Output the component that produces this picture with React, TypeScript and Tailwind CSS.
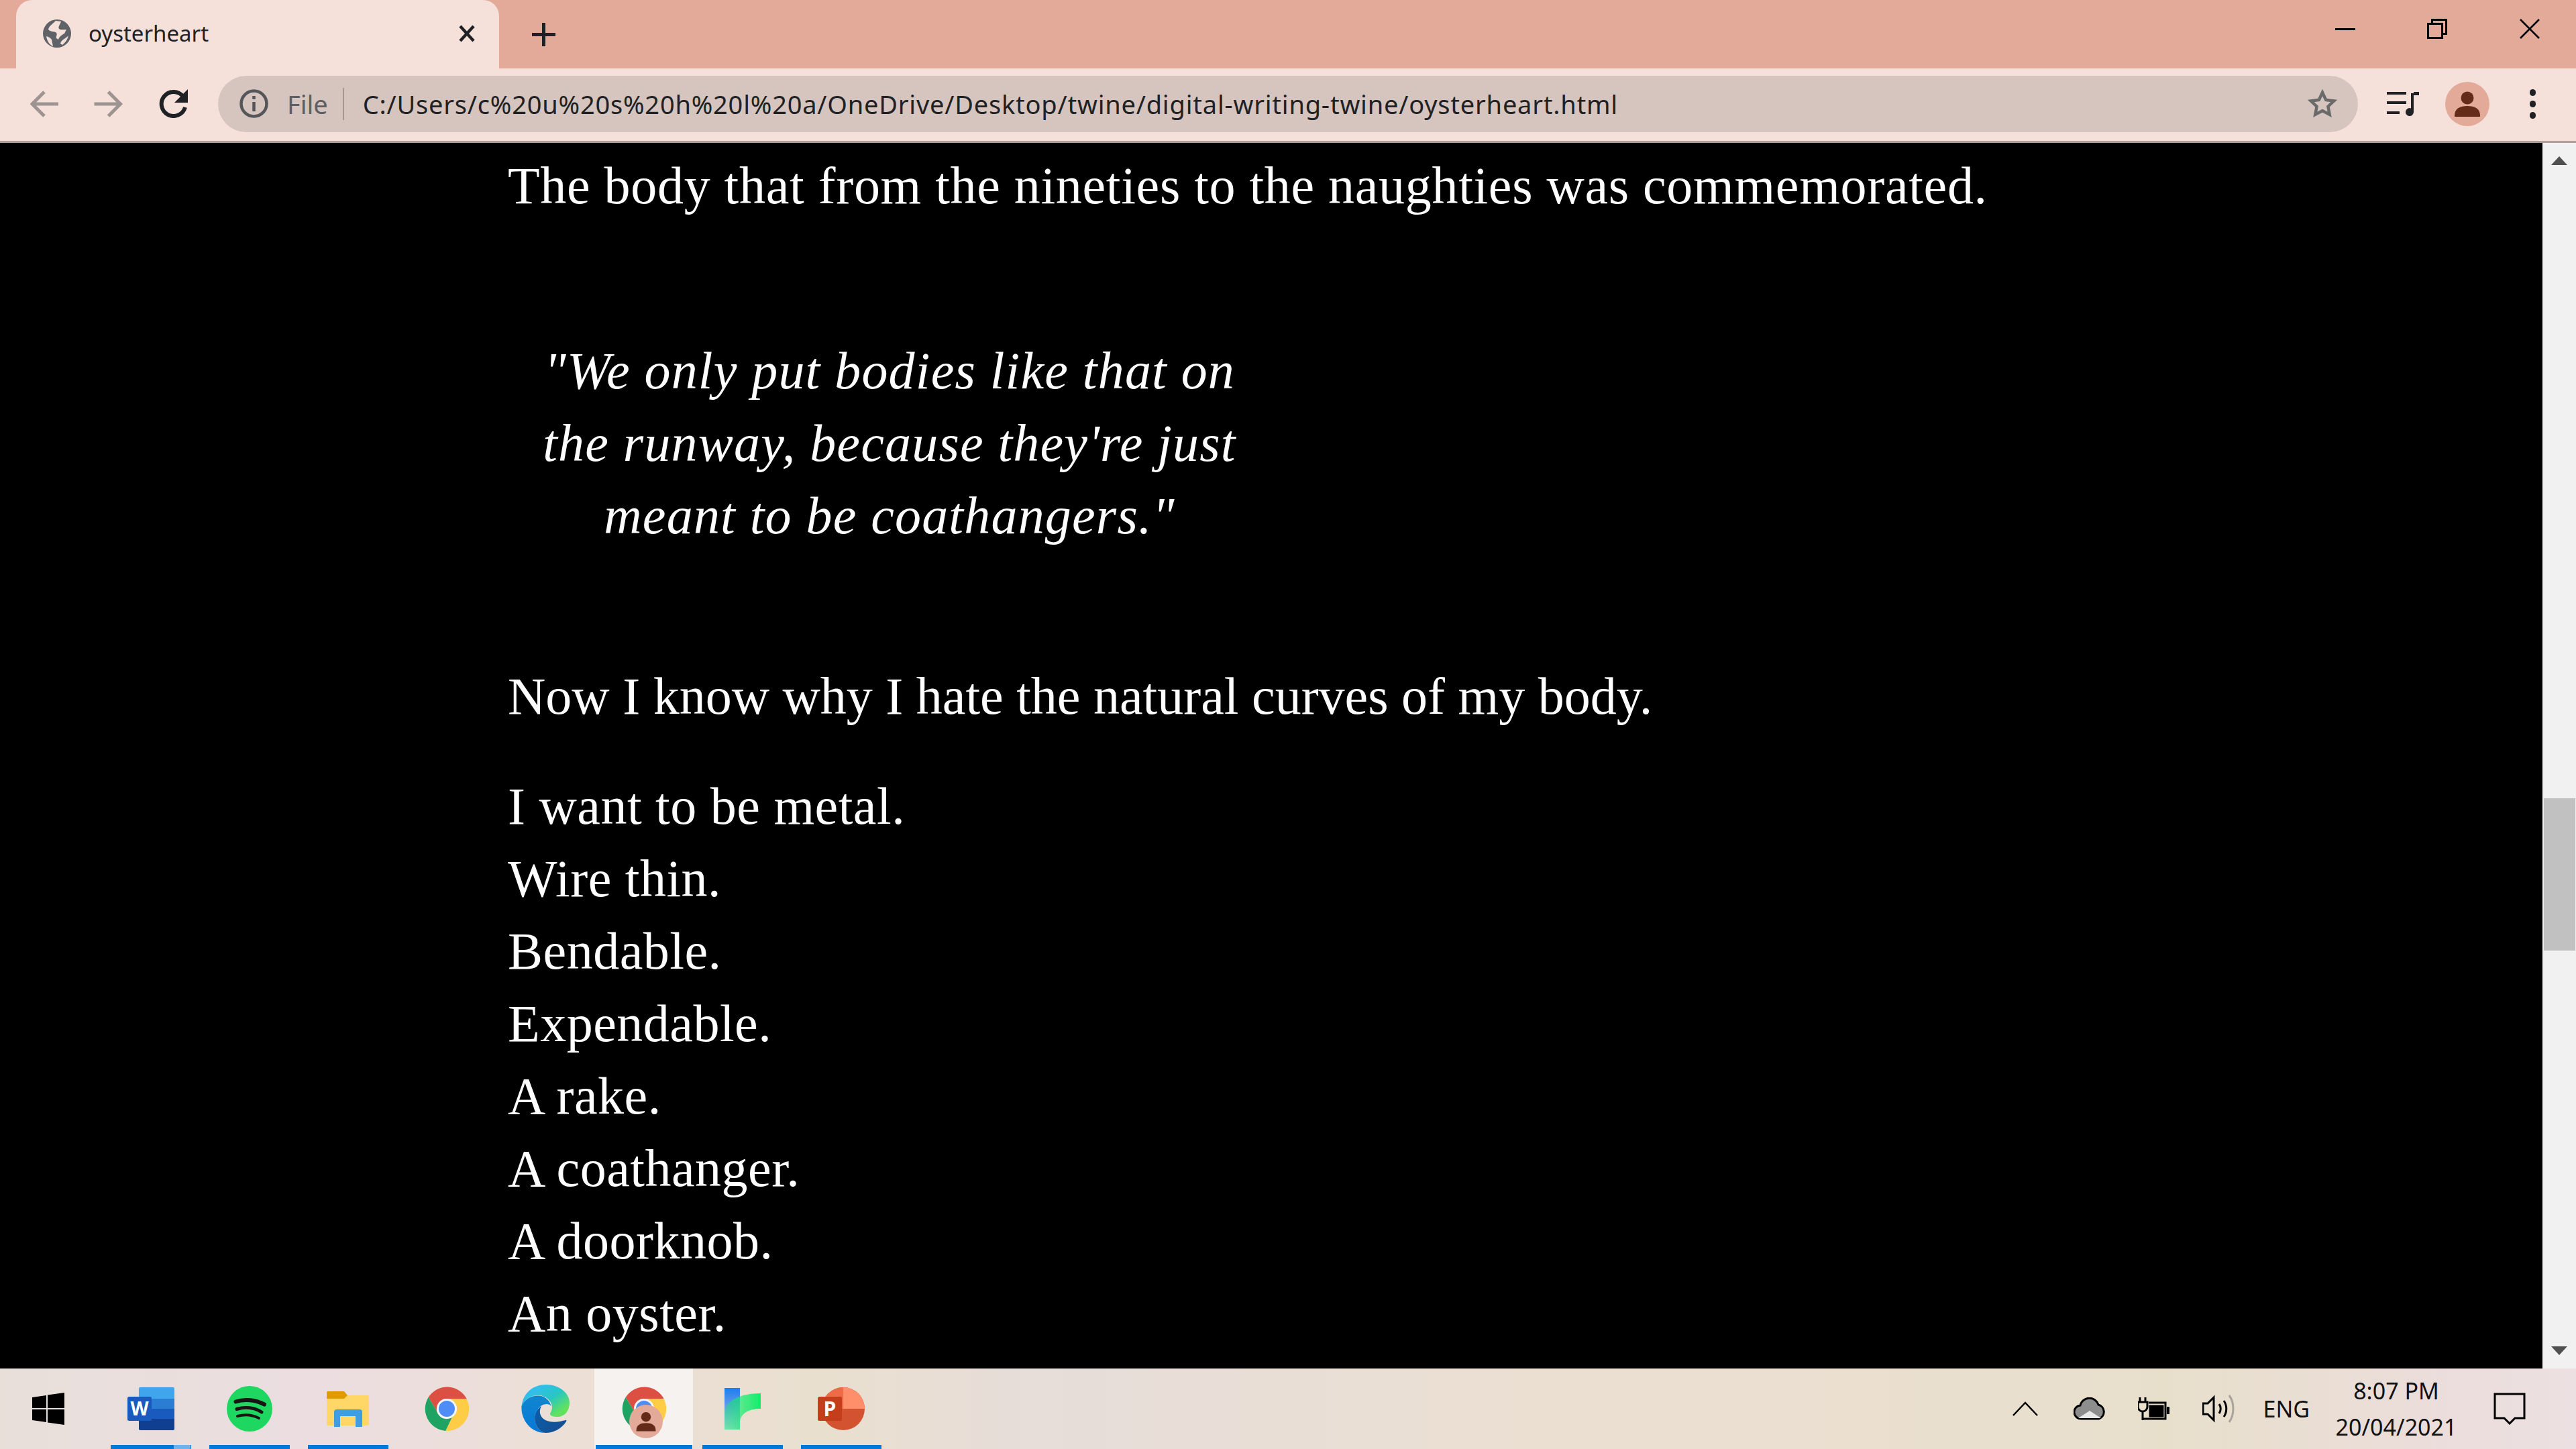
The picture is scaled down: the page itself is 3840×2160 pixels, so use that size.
const ui = { fontFamily: '"Noto Sans", "Open Sans", sans-serif' }

const Globe = () => (
  <svg width="44" height="44" viewBox="0 0 44 44">
    <circle cx="22" cy="22" r="21" fill="#5f6368" />
    <path d="M20 3c-5 5-10 8-11 13 3 4 9 2 12 5 2 3-1 5 0 8l3 2c1-4 5-7 9-9l3-6c-4 0-9 1-11-1-2-3 2-7 3-11z" fill="#f5e1da" />
    <path d="M6 26c3 1 6 2 8 5l2 10c-5-2-9-8-10-15zM37 27l2-2c-1 5-4 10-9 14l-3-2c1-5 6-7 10-10z" fill="#f5e1da" />
  </svg>
)

const Chrome = () => (
  <svg width="66" height="66" viewBox="0 0 66 66">
    <path d="M5.700 15.700A33 33 0 0 1 62.700 18.300H33A15 15 0 0 0 18.300 37Z" fill="#dc5044" />
    <path d="M5.700 15.700L18.300 37A15 15 0 0 0 41 45.700L31.300 66A33 33 0 0 1 5.700 15.700Z" fill="#1ea362" />
    <path d="M62.700 18.300A33 33 0 0 1 31.300 66L41 45.700A15 15 0 0 0 33 18Z" fill="#ffcd45" />
    <circle cx="33" cy="33" r="15" fill="#f4f6fb" />
    <circle cx="33" cy="33" r="12" fill="#4e8df5" />
  </svg>
)

const Person = ({ size, bg }: { size: number; bg: string }) => (
  <svg width={size} height={size} viewBox="0 0 66 66">
    <circle cx="33" cy="33" r="33" fill={bg} />
    <circle cx="33" cy="24" r="9.5" fill="#652b19" />
    <path d="M14 50c0-10 8-14 19-14s19 4 19 14v2H14z" fill="#652b19" />
  </svg>
)

const Word = () => (
  <svg width="70" height="64" viewBox="0 0 70 64">
    <path d="M17 2a2 2 0 0 1 2-2h49a2 2 0 0 1 2 2v15H17z" fill="#41a5ee" />
    <path d="M17 17h53v15H17z" fill="#2b7cd3" />
    <path d="M17 32h53v15H17z" fill="#185abd" />
    <path d="M17 47h53v15a2 2 0 0 1-2 2H19a2 2 0 0 1-2-2z" fill="#103f91" />
    <rect x="0" y="14" width="36" height="36" rx="2.500" fill="#185abd" />
    <text x="18" y="42" textAnchor="middle" fontSize="28" fontWeight="700" fill="#fff" fontFamily="Open Sans, sans-serif">W</text>
  </svg>
)

const Spotify = () => (
  <svg width="68" height="68" viewBox="0 0 68 68">
    <circle cx="34" cy="34" r="34" fill="#1ed760" />
    <path d="M13.500 23.500C27 19 43 20.500 56 27.500" stroke="#191414" strokeWidth="6" strokeLinecap="round" fill="none" />
    <path d="M15 34.500C27 31 41 32 52 39" stroke="#191414" strokeWidth="5" strokeLinecap="round" fill="none" />
    <path d="M16 45C27 42 38 43 48 48" stroke="#191414" strokeWidth="4" strokeLinecap="round" fill="none" />
  </svg>
)

const Files = () => (
  <svg width="63" height="53" viewBox="0 0 63 53">
    <path d="M0 8a2 2 0 0 1 2-2h59a2 2 0 0 1 2 2v40a3 3 0 0 1-3 3H3a3 3 0 0 1-3-3z" fill="#ffd767" />
    <path d="M0 2a2 2 0 0 1 2-2h24l5 6-5 5H0z" fill="#e09b00" />
    <path d="M11 31a4 4 0 0 1 4-4h34a4 4 0 0 1 4 4v22H43V37H20v16h-9z" fill="#3f9de3" />
  </svg>
)

const Edge = () => (
  <svg width="72" height="72" viewBox="0 0 72 72">
    <defs>
      <linearGradient id="edgeTop" x1="0.2" y1="0.1" x2="0.9" y2="0.75">
        <stop offset="0" stopColor="#33bdf2" />
        <stop offset="0.55" stopColor="#29c6c4" />
        <stop offset="1" stopColor="#62e25c" />
      </linearGradient>
      <linearGradient id="edgeLeft" x1="0.5" y1="0" x2="0.5" y2="1">
        <stop offset="0" stopColor="#1186cf" />
        <stop offset="1" stopColor="#0578d6" />
      </linearGradient>
      <linearGradient id="edgeDark" x1="0" y1="0" x2="1" y2="0.6">
        <stop offset="0" stopColor="#0a5fae" />
        <stop offset="1" stopColor="#144f91" />
      </linearGradient>
    </defs>
    <path d="M0.500 32C3 12 18 0 37 0 57 0 72 13 72 27 72 40 64 48 54 48 47 48 42 46 43 43 44 41 46 38 46 34 46 24 36 16 25 16 14 16 5 22 0.500 32Z" fill="url(#edgeTop)" />
    <path d="M0.500 32C-1 52 14 72 36 72 26 70 20 60 20 50 20 40 28 29 38 29 41 29 43 30 44.500 32 42 22 34 16.500 25 16.500 14 16.500 5 22 0.500 32Z" fill="url(#edgeLeft)" />
    <path d="M36 72C26 70 20 60 20 50 20 42 24 36 30 32 27 38 27 44 31 49 38 57 52 57 66 53 67 52 68 54 67 55 60 66 48 72 36 72Z" fill="url(#edgeDark)" />
  </svg>
)

const Feed = () => (
  <svg width="54" height="62" viewBox="0 0 54 62">
    <defs>
      <linearGradient id="feedBlue" x1="0" y1="0" x2="0" y2="1">
        <stop offset="0" stopColor="#1a7fee" />
        <stop offset="0.5" stopColor="#6f9fe8" />
        <stop offset="1" stopColor="#c3d5e0" />
      </linearGradient>
      <linearGradient id="feedGreen" x1="0" y1="0" x2="1" y2="0">
        <stop offset="0" stopColor="#10ee6b" stopOpacity="0.4" />
        <stop offset="1" stopColor="#10ee6b" />
      </linearGradient>
    </defs>
    <path d="M0 0h23v62H0z" fill="url(#feedBlue)" />
    <path d="M0 62V38C0 20 22 8 54 8V31C36 31 23 38 23 52V62Z" fill="url(#feedGreen)" />
  </svg>
)

const Powerpoint = () => (
  <svg width="70" height="64" viewBox="0 0 70 64">
    <circle cx="38" cy="32" r="32" fill="#d35230" />
    <path d="M38 0a32 32 0 0 1 32 32H38z" fill="#ff8f6b" />
    <path d="M6 32a32 32 0 0 1 32-32v32z" fill="#ed6c47" />
    <rect x="0" y="14" width="36" height="36" rx="2.500" fill="#c43e1c" />
    <text x="18" y="43" textAnchor="middle" fontSize="30" fontWeight="700" fill="#fff" fontFamily="Open Sans, sans-serif">P</text>
  </svg>
)

const apps = [
  { icon: <Word />, extra: true },
  { icon: <Spotify /> },
  { icon: <Files /> },
  { icon: <Chrome />, idle: true },
  { icon: <Edge />, idle: true },
  { icon: <Chrome />, active: true },
  { icon: <Feed /> },
  { icon: <Powerpoint /> },
]

const lines = ['I want to be metal.', 'Wire thin.', 'Bendable.', 'Expendable.', 'A rake.', 'A coathanger.', 'A doorknob.', 'An oyster.']

export default function App() {
  return (
    <div className="w-[3840px] h-[2160px] flex flex-col overflow-hidden bg-black text-[#202124]" style={ui}>
      {/* tab strip */}
      <div className="h-[102px] shrink-0 bg-[#e3aa99] flex">
        <div className="ml-[24px] mt-0 w-[720px] h-[102px] bg-[#f5e1da] rounded-t-[24px] flex items-center pl-[39px] pb-[3px]">
          <Globe />
          <span className="ml-[25px] text-[33px] leading-none">oysterheart</span>
          <svg className="ml-auto mr-[36px]" width="24" height="26" viewBox="0 0 24 26">
            <path d="M2 2l20 22M22 2L2 24" stroke="#202124" strokeWidth="4.5" />
          </svg>
        </div>
        <svg className="ml-[48px] mt-[33px]" width="37" height="37" viewBox="0 0 37 37">
          <path d="M18.500 1v35M1 18.500h35" stroke="#202124" strokeWidth="5" />
        </svg>
        <div className="ml-auto flex items-start pt-[28px]">
          <div className="w-[30px] h-[3px] bg-black mt-[14px]" />
          <svg className="ml-[107px]" width="30" height="30" viewBox="0 0 30 30" fill="none" stroke="#000" strokeWidth="3">
            <rect x="1.500" y="7.500" width="21" height="21" />
            <path d="M7.500 7V1.500h21v21H23" />
          </svg>
          <svg className="ml-[108px] mr-[54px]" width="30" height="30" viewBox="0 0 30 30" stroke="#000" strokeWidth="2.500">
            <path d="M1 1l28 28M29 1L1 29" />
          </svg>
        </div>
      </div>

      {/* toolbar */}
      <div className="h-[111px] shrink-0 bg-[#f5e1da] border-b-[3px] border-[#b0a09b] flex items-center pb-[3px]">
        <svg className="ml-[45px]" width="42" height="42" viewBox="0 0 42 42" fill="none" stroke="#9d9390" strokeWidth="5">
          <path d="M42 21H5M21 3L3 21l18 18" />
        </svg>
        <svg className="ml-[53px]" width="43" height="42" viewBox="0 0 42 42" fill="none" stroke="#9d9390" strokeWidth="5">
          <path d="M0 21h37M21 3l18 18-18 18" />
        </svg>
        <svg className="ml-[54px]" width="43" height="43" viewBox="0 0 43 43" fill="none">
          <path d="M36 11a18 18 0 1 0 3 16" stroke="#202124" strokeWidth="6" />
          <path d="M43 0v20H23z" fill="#202124" />
        </svg>
        <div className="ml-[45px] w-[3190px] h-[84px] rounded-full bg-[#d6c5be] flex items-center pl-[32px] pr-[31px]">
          <svg className="shrink-0" width="43" height="43" viewBox="0 0 43 43" fill="none" stroke="#55565a" strokeWidth="4.500">
            <circle cx="21.500" cy="21.500" r="19" />
            <path d="M21.500 19v14M21.500 10v5" />
          </svg>
          <span className="ml-[28px] text-[38px] leading-none text-[#5c5f63]">File</span>
          <div className="ml-[22px] w-[2px] h-[48px] bg-[#a39791]" />
          <span className="ml-[28px] text-[38px] leading-none tracking-[0.8px] whitespace-nowrap">C:/Users/c%20u%20s%20h%20l%20a/OneDrive/Desktop/twine/digital-writing-twine/oysterheart.html</span>
          <svg className="ml-auto" width="44" height="44" viewBox="0 0 44 44" fill="none" stroke="#6a6a6a" strokeWidth="4.500">
            <path d="M22 5l5.200 11 12 1.500-8.800 8.200 2.300 12L22 32l-10.700 5.700 2.300-12-8.800-8.200 12-1.500z" />
          </svg>
        </div>
        <svg className="ml-[43px]" width="48" height="36" viewBox="0 0 48 36" fill="#202124">
          <path d="M0 0h29v4H0zM0 14h29v4H0zM0 29h19v4H0z" />
          <path d="M36 2h4v28a6 6 0 1 1-4-5.600zM40 0h8v5h-8z" />
        </svg>
        <div className="ml-[39px]"><Person size={66} bg="#e3aa99" /></div>
        <div className="ml-[60px] flex flex-col gap-[7px]">
          <div className="w-[9px] h-[10px] rounded-full bg-[#202124]" />
          <div className="w-[9px] h-[10px] rounded-full bg-[#202124]" />
          <div className="w-[9px] h-[10px] rounded-full bg-[#202124]" />
        </div>
      </div>

      {/* page */}
      <div className="flex-1 min-h-0 flex bg-black">
        <div className="flex-1 overflow-hidden pl-[757px] pt-[10px] text-white text-[78px] leading-[108px] font-['Liberation_Serif',serif]">
          <p className="tracking-[0.7px]">The body that from the nineties to the naughties was commemorated.</p>
          <blockquote className="mt-[168px] w-[1138px] text-center italic tracking-[1.2px]">
            "We only put bodies like that on<br />
            the runway, because they're just<br />
            meant to be coathangers."
          </blockquote>
          <p className="mt-[161px]">Now I know why I hate the natural curves of my body.</p>
          <p className="mt-[56px] tracking-[0.5px]">
            {lines.map((line) => (
              <span key={line} className="block">{line}</span>
            ))}
          </p>
        </div>
        <div className="w-[50px] shrink-0 bg-[#f1f1f1] flex flex-col items-center pt-[20px] pb-[20px]">
          <div className="w-0 h-0 border-x-[12px] border-x-transparent border-b-[13px] border-b-[#505050]" />
          <div className="mt-[944px] w-[47px] h-[227px] bg-[#c1c1c1]" />
          <div className="mt-auto w-0 h-0 border-x-[12px] border-x-transparent border-t-[13px] border-t-[#505050]" />
        </div>
      </div>

      {/* taskbar */}
      <div className="h-[120px] shrink-0 flex items-stretch bg-[linear-gradient(90deg,#e8dfd9_0%,#ebdde0_12%,#ecdfd6_22%,#e9dfcf_32%,#e7ddd9_40%,#ebdfd2_60%,#e9dfce_80%,#e8dfcb_84%,#ebdddb_95%,#ece0e2_100%)]">
        <div className="w-[151px] shrink-0 flex items-center pl-[48px]">
          <svg width="48" height="48" viewBox="0 0 48 48" fill="#000">
            <path d="M0 7l21-3v19H0zM23 3.500L48 0v23H23zM0 25h21v19L0 41zM23 25h25v23l-25-3.500z" />
          </svg>
        </div>
        {apps.map((app, i) => (
          <div key={i} className={`relative w-[147px] shrink-0 flex items-center justify-center ${app.active ? 'bg-[#f6f2ef]' : ''}`}>
            {app.icon}
            {app.active && (
              <div className="absolute left-[52px] top-[54px]"><Person size={50} bg="#e3aa99" /></div>
            )}
            {!app.idle && (
              <div className={`absolute bottom-0 h-[6px] bg-[#0078d7] ${app.active ? 'w-[144px]' : 'w-[120px]'}`} />
            )}
            {app.extra && <div className="absolute bottom-0 left-[108px] h-[6px] w-[25px] bg-[#6fb3ea]" />}
          </div>
        ))}
        <div className="ml-auto flex items-center text-[#111]">
          <svg width="38" height="22" viewBox="0 0 38 22" fill="none" stroke="#000" strokeWidth="2.500">
            <path d="M1 21L19 2l18 19" />
          </svg>
          <svg className="ml-[53px]" width="48" height="34" viewBox="0 0 48 34">
            <path d="M12 32a10 10 0 0 1-2-20 14 14 0 0 1 27-1 11 11 0 0 1 1 21z" fill="#8d8d8d" stroke="#000" strokeWidth="3" />
            <path d="M7 31l17-11 17 11z" fill="#e8e8e8" />
          </svg>
          <svg className="ml-[48px]" width="48" height="34" viewBox="0 0 48 34" fill="none" stroke="#000" strokeWidth="3">
            <path d="M3 0v7M11 0v7M0 7h14v7a7 7 0 0 1-14 0zM7 21v13M8 32h33V8H16" />
            <path d="M18 13h19v15H18z" fill="#000" />
            <path d="M45 14v11" strokeWidth="4" />
          </svg>
          <svg className="ml-[48px]" width="48" height="42" viewBox="0 0 48 42" fill="none" stroke="#000" strokeWidth="3">
            <path d="M1 13h7L17 4v34l-9-9H1z" />
            <path d="M25 14c3 4 3 10 0 14M32 9c5 7 5 17 0 24" />
            <path d="M40 1c8 11 8 29 0 40" stroke="#a8a39c" />
          </svg>
          <span className="ml-[43px] text-[34px] leading-none">ENG</span>
          <div className="ml-[34px] w-[190px] flex flex-col items-center text-[34px] leading-[54px]">
            <span>8:07 PM</span>
            <span>20/04/2021</span>
          </div>
          <svg className="ml-[50px] mr-[75px]" width="48" height="48" viewBox="0 0 48 48" fill="none" stroke="#000" strokeWidth="3">
            <path d="M2 2h44v36H32l-8 8-8-8H2z" />
          </svg>
        </div>
      </div>
    </div>
  )
}
